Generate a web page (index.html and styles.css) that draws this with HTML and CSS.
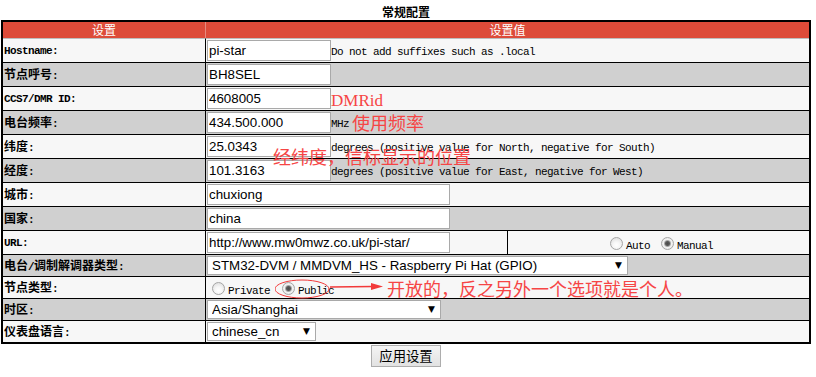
FILE: index.html
```html
<!DOCTYPE html>
<html lang="zh-CN">
<head>
<meta charset="utf-8">
<title>常规配置</title>
<link rel="stylesheet" href="styles.css">
</head>
<body>
<div class="page">
  <h2 class="title">常规配置</h2>
  <table class="cfg">
    <thead>
      <tr><th class="hk">设置</th><th class="hv" colspan="2">设置值</th></tr>
    </thead>
    <tbody>
      <tr class="r24"><td class="k"><span class="lat">Hostname:</span></td><td class="v" colspan="2"><input class="in w124" value="pi-star"><span class="hint">Do not add suffixes such as .local</span></td></tr>
      <tr class="r24"><td class="k"><span class="cn">节点呼号</span>:</td><td class="v" colspan="2"><input class="in w124" value="BH8SEL"></td></tr>
      <tr class="r24"><td class="k"><span class="lat">CCS7/DMR ID:</span></td><td class="v" colspan="2"><input class="in w124" value="4608005"><span class="note-en">DMRid</span></td></tr>
      <tr class="r24"><td class="k"><span class="cn">电台频率</span>:</td><td class="v" colspan="2"><input class="in w124" value="434.500.000"><span class="hint">MHz</span><span class="note note-freq">使用频率</span></td></tr>
      <tr class="r24"><td class="k"><span class="cn">纬度</span>:</td><td class="v" colspan="2"><input class="in w124" value="25.0343"><span class="hint">degrees (positive value for North, negative for South)</span></td></tr>
      <tr class="r24"><td class="k"><span class="cn">经度</span>:</td><td class="v" colspan="2"><input class="in w124" value="101.3163"><span class="hint">degrees (positive value for East, negative for West)</span></td></tr>
      <tr class="r24"><td class="k"><span class="cn">城市</span>:</td><td class="v" colspan="2"><input class="in w243" value="chuxiong"></td></tr>
      <tr class="r24"><td class="k"><span class="cn">国家</span>:</td><td class="v" colspan="2"><input class="in w243" value="china"></td></tr>
      <tr class="r24"><td class="k"><span class="lat">URL:</span></td><td class="v url"><input class="in w243" value="http://www.mw0mwz.co.uk/pi-star/"></td><td class="v radios"><input class="rd" type="radio" name="urlmode"><span class="hint">Auto</span><input class="rd rd-gap" type="radio" name="urlmode" checked><span class="hint">Manual</span></td></tr>
      <tr class="r22"><td class="k"><span class="cn">电台</span>/<span class="cn">调制解调器类型</span>:</td><td class="v" colspan="2"><span class="sel w421"><select><option>STM32-DVM / MMDVM_HS - Raspberry Pi Hat (GPIO)</option></select></span></td></tr>
      <tr class="r22"><td class="k"><span class="cn">节点类型</span>:</td><td class="v node" colspan="2"><input class="rd" type="radio" name="nodetype"><span class="hint">Private</span><input class="rd rd-gap2" type="radio" name="nodetype" checked><span class="hint">Public</span><span class="note note-node">开放的，反之另外一个选项就是个人。</span><svg class="mark" width="120" height="24" viewBox="0 0 120 24"><ellipse cx="27" cy="11" rx="27" ry="9" fill="none" stroke="#f23a3a" stroke-width="1"/><line x1="55" y1="9" x2="98" y2="8.5" stroke="#f23a3a" stroke-width="1.5"/><polygon points="96,5 108,8.5 96,12" fill="#f23a3a"/></svg></td></tr>
      <tr class="r22"><td class="k"><span class="cn">时区</span>:</td><td class="v" colspan="2"><span class="sel w234"><select><option>Asia/Shanghai</option></select></span></td></tr>
      <tr class="r22"><td class="k"><span class="cn">仪表盘语言</span>:</td><td class="v" colspan="2"><span class="sel w109"><select><option>chinese_cn</option></select></span></td></tr>
    </tbody>
  </table>
  <span class="note note-geo">经纬度，信标显示的位置</span>
  <div class="actions"><button class="btn" type="button">应用设置</button></div>
</div>
</body>
</html>
```

FILE: styles.css
```css
html, body {
  margin: 0;
  padding: 0;
  background: #ffffff;
}

body {
  font-family: "Liberation Sans", Arial, sans-serif;
  color: #000;
}

.page {
  position: relative;
  width: 816px;
}

.title {
  margin: 0;
  padding-top: 5px;
  height: 15px;
  width: 812px;
  text-align: center;
  font: bold 12px/14px "Noto Sans CJK SC", sans-serif;
}

.cfg {
  margin-left: 1px;
  width: 810px;
  border: 2px solid #000;
  border-spacing: 0;
  table-layout: fixed;
}

.cfg th {
  height: 16px;
  padding: 0;
  background: #dd4b39;
  color: #fff;
  font: 12px/16px "Noto Sans CJK SC", sans-serif;
  text-align: center;
}

.cfg .hk {
  width: 202px;
}

.cfg .hv {
  border-left: 1px solid #e58a7e;
}

.cfg td {
  padding: 0 0 0 1px;
  border-top: 1px solid #000;
  vertical-align: middle;
  line-height: 16px;
  white-space: nowrap;
  overflow: visible;
}

.cfg tbody tr:first-child td {
  border-top-color: #bdbdbd;
}

.cfg tbody tr:nth-child(odd) td {
  background: #f7f7f7;
}

.cfg tbody tr:nth-child(even) td {
  background: #d0d0d0;
}

.r24 { height: 24px; }
.r22 { height: 22px; }

.k {
  font: bold 11px "Liberation Mono", monospace;
  letter-spacing: -0.6px;
}

.k .cn {
  font: bold 12px "Noto Sans CJK SC", sans-serif;
  letter-spacing: 0;
}

.k .lat {
  font: bold 11px "Liberation Mono", monospace;
  letter-spacing: -0.6px;
}

.v {
  border-left: 1px solid #000;
}

.url {
  width: 299px;
}

.radios {
  text-align: center;
}

.in {
  box-sizing: border-box;
  height: 21px;
  margin: 0;
  padding: 0 1px;
  border: 1px solid #a9a9a9;
  background: #fff;
  font: 13.333px "Liberation Sans", Arial, sans-serif;
  color: #000;
  outline: none;
}

.w124 { width: 124px; }
.w243 { width: 243px; }

.hint {
  font: 11px "Liberation Mono", monospace;
  letter-spacing: -0.6px;
}

.note {
  font: 18px/18px "Noto Sans CJK SC", sans-serif;
  color: #f64545;
}

.note-en {
  font: 17px/18px "Liberation Serif", serif;
  color: #f64545;
  vertical-align: -3px;
}

.note-freq {
  margin-left: 3px;
  vertical-align: -3px;
}

.note-geo {
  position: absolute;
  left: 273px;
  top: 147px;
}

.node {
  position: relative;
}

.note-node {
  margin-left: 53px;
  vertical-align: -2px;
}

.mark {
  position: absolute;
  left: 69px;
  top: 1px;
}

.rd {
  -webkit-appearance: none;
  appearance: none;
  box-sizing: border-box;
  width: 13px;
  height: 13px;
  margin: 3px 3px 0 5px;
  border: 1px solid #a5a5a5;
  border-radius: 50%;
  background: radial-gradient(circle at 50% 65%, #ffffff 0, #f7f7f7 35%, #d8d8d8 100%);
  vertical-align: -1px;
}

.rd:checked {
  background: radial-gradient(circle at 50% 50%, #4a4a4a 0, #5a5a5a 2px, #a8a8a8 3px, #f2f2f2 4px, #e0e0e0 100%);
}

.rd-gap {
  margin-left: 11px;
}

.rd-gap2 {
  margin-left: 12px;
}

.sel {
  position: relative;
  display: inline-block;
  vertical-align: middle;
}

.sel select {
  -webkit-appearance: none;
  appearance: none;
  box-sizing: border-box;
  width: 100%;
  height: 19px;
  margin: 0;
  padding: 0 0 0 4px;
  border: 1px solid #a9a9a9;
  border-radius: 0;
  background: #fff;
  font: 13.333px/17px "Liberation Sans", Arial, sans-serif;
  color: #000;
}

.sel::after {
  content: "\25BC";
  position: absolute;
  right: 6px;
  top: 4px;
  font: 9px/10px "DejaVu Sans", sans-serif;
  color: #000;
  pointer-events: none;
}

.w421 { width: 421px; }
.w234 { width: 234px; }
.w109 { width: 109px; }

.actions {
  width: 812px;
  padding-top: 1px;
  text-align: center;
}

.btn {
  box-sizing: border-box;
  height: 22px;
  margin: 0;
  padding: 0 7px;
  border: 1px solid #adadad;
  border-radius: 0;
  background: linear-gradient(#f4f4f4, #e2e2e2);
  font: 13.333px/18px "Noto Sans CJK SC", sans-serif;
  color: #000;
}
```
